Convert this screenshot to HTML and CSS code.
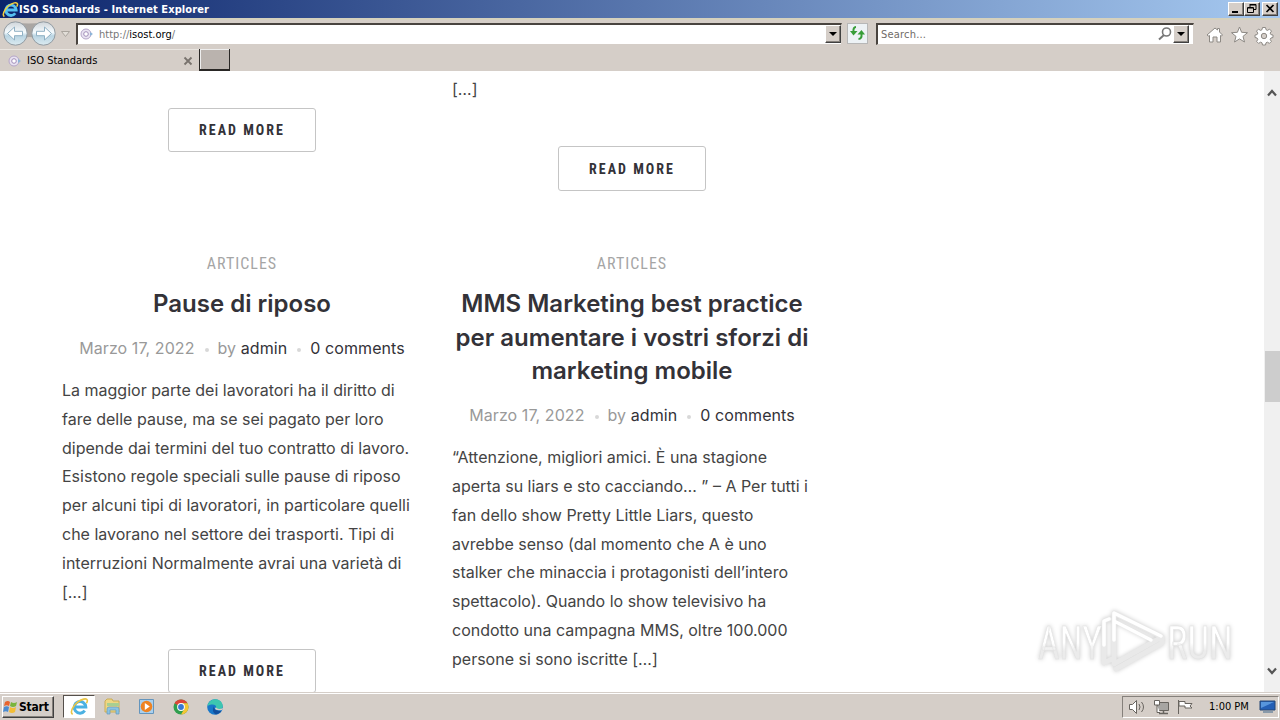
FILE: index.html
```
<!DOCTYPE html>
<html lang="it">
<head>
  <meta charset="UTF-8">
  <title>ISO Standards</title>
  <link rel="stylesheet" href="styles.css">
</head>
<body>
  <div class="titlebar">
    <svg viewBox="0 0 18 18" width="17" height="17"><path d="M14 13a5.500 5.500 0 1 1 1-3.500H5" fill="none" stroke="#54c0f0" stroke-width="3"/><path d="M2.500 16.500C-1 14 5 4 13 2c4-1 4 2 2.500 4" fill="none" stroke="#f5d03c" stroke-width="1.600"/></svg>
    <span class="window-title">ISO Standards - Internet Explorer</span>
    <div class="window-buttons">
      <button><svg width="14" height="12"><path d="M3 9h6" stroke="#000" stroke-width="2"/></svg></button>
      <button><svg width="14" height="12"><path d="M5 2h6M5 1.500h6v5H9M5 1v3M3 5h5M2.500 4.500h6v5h-6z" fill="none" stroke="#000"/></svg></button>
      <button class="close"><svg width="14" height="12"><path d="M3.500 2l7 7M10.500 2l-7 7" stroke="#000" stroke-width="1.700"/></svg></button>
    </div>
  </div>

  <div class="navbar">
    <svg class="nav-arrows" width="74" height="30">
      <defs><linearGradient id="ball" x2="0" y2="1"><stop stop-color="#cfd5da"/><stop offset=".45" stop-color="#f4fafd"/><stop offset=".6" stop-color="#b9d4e2"/><stop offset="1" stop-color="#dcebf1"/></linearGradient></defs>
      <path d="M14 3q15 3 30 0v18q-14-6-30 0z" fill="#aaa6a3"/>
      <circle cx="15.500" cy="14.500" r="11.700" fill="url(#ball)" stroke="#929ba2"/>
      <circle cx="43.500" cy="14.500" r="11.700" fill="url(#ball)" stroke="#929ba2"/>
      <path d="M7.500 14.500l7-6.500v4.300h8v4.400h-8v4.300zM51.500 14.500l-7-6.500v4.300h-8v4.400h8v4.300z" fill="#fff" stroke="#8fb0c4"/>
      <path d="M61.500 12.500h8l-4 5z" fill="#e2ded8" stroke="#aaa59e"/>
    </svg>
    <div class="address">
      <svg class="site-icon" width="14" height="14"><circle cx="6" cy="7" r="5" fill="#e9e4f2" stroke="#b5a5c9"/><circle cx="6" cy="7" r="2.300" fill="#fff" stroke="#a18db9"/><path d="M10 5l3 2-3 2" fill="#8bb5d8"/></svg>
      <span class="url">http://<b>isost.org</b>/</span>
      <button class="drop"></button>
    </div>
    <button class="refresh"><svg width="19" height="19"><path d="M8 3Q5 3 5.500 8" fill="none" stroke="#379d37" stroke-width="2"/><path d="M2 7h7.500l-4 4.500z" fill="#379d37"/><path d="M10.500 15q3.500 0 3-5" fill="none" stroke="#379d37" stroke-width="2"/><path d="M9.500 10.500H17l-3.500-4.500z" fill="#379d37"/></svg></button>
    <div class="search">
      <span>Search...</span>
      <svg width="16" height="16"><circle cx="9.500" cy="6" r="4" fill="none" stroke="#777" stroke-width="1.600"/><path d="M7 9l-5 4.500" stroke="#777" stroke-width="2"/></svg>
      <button class="drop"></button>
    </div>
    <svg class="tools" width="72" height="22">
      <g fill="#fff" stroke="#8d8984">
        <path d="M2 11l8-7 2.500 2V4.500h2V8l3 3-1 1-1-.5V18H12v-5H8v5H4.500v-6.500l-1 .5z"/>
        <path d="M34.500 3l2.100 5.300 5.900.4-4.500 3.700 1.500 5.600-5-3.100-5 3.100 1.500-5.600-4.500-3.700 5.900-.4z"/>
        <g id="gear">
          <path d="M57.500 3.500h3l.5 2.200 1.500.7 2-1.300 2 2-1.300 2 .7 1.500 2.100.4v2.500l-2.100.5-.7 1.500 1.200 1.900-2 2-1.900-1.200-1.500.6-.5 2.200h-3l-.5-2.200-1.500-.6-1.900 1.200-2-2 1.200-1.900-.7-1.500-2.100-.5V11l2.100-.4.7-1.500-1.300-2 2-2 2 1.300 1.500-.7z"/>
          <circle cx="59" cy="12" r="2.700" fill="#d5cec8"/>
        </g>
      </g>
    </svg>
  </div>

  <div class="tabs">
    <div class="tab">
      <svg class="site-icon" width="14" height="14"><circle cx="6" cy="7" r="5" fill="#e9e4f2" stroke="#b5a5c9"/><circle cx="6" cy="7" r="2.300" fill="#fff" stroke="#a18db9"/><path d="M10 5l3 2-3 2" fill="#8bb5d8"/></svg>
      <span>ISO Standards</span>
      <svg class="tab-close" width="10" height="10"><path d="M1.500 1.500l7 7M8.500 1.500l-7 7" stroke="#79736e" stroke-width="1.800"/></svg>
    </div>
    <div class="new-tab"></div>
  </div>

  <div class="viewport">
    <main class="posts">
      <article class="post previous first">
        <a class="read-more"><span>READ MORE</span></a>
      </article>
      <article class="post previous second">
        <p>[…]</p>
        <a class="read-more"><span>READ MORE</span></a>
      </article>
      <article class="post">
        <div class="category"><span>ARTICLES</span></div>
        <h2>Pause di riposo</h2>
        <div class="meta"><span>Marzo 17, 2022</span><i></i><span>by <a>admin</a></span><i></i><a>0 comments</a></div>
        <p>La maggior parte dei lavoratori ha il diritto di<br>fare delle pause, ma se sei pagato per loro<br>dipende dai termini del tuo contratto di lavoro.<br>Esistono regole speciali sulle pause di riposo<br>per alcuni tipi di lavoratori, in particolare quelli<br>che lavorano nel settore dei trasporti. Tipi di<br>interruzioni Normalmente avrai una varietà di<br>[…]</p>
        <a class="read-more"><span>READ MORE</span></a>
      </article>
      <article class="post">
        <div class="category"><span>ARTICLES</span></div>
        <h2>MMS Marketing best practice<br>per aumentare i vostri sforzi di<br>marketing mobile</h2>
        <div class="meta"><span>Marzo 17, 2022</span><i></i><span>by <a>admin</a></span><i></i><a>0 comments</a></div>
        <p>“Attenzione, migliori amici. È una stagione<br>aperta su liars e sto cacciando… ” – A Per tutti i<br>fan dello show Pretty Little Liars, questo<br>avrebbe senso (dal momento che A è uno<br>stalker che minaccia i protagonisti dell’intero<br>spettacolo). Quando lo show televisivo ha<br>condotto una campagna MMS, oltre 100.000<br>persone si sono iscritte […]</p>
      </article>
    </main>
    <div class="scrollbar">
      <svg class="up" width="12" height="10"><path d="M2 7.500L6 3l4 4.500" fill="none" stroke="#555" stroke-width="2.200"/></svg>
      <div class="thumb"></div>
      <svg class="down" width="12" height="10"><path d="M2 2.500L6 7l4-4.500" fill="none" stroke="#555" stroke-width="2.200"/></svg>
    </div>
    <svg class="watermark" width="220" height="80">
      <defs><linearGradient id="fade" x2="0" y2="1"><stop offset=".5" stop-color="#fff"/><stop offset=".65" stop-color="#ebebeb"/></linearGradient></defs>
      <text x="8" y="59" textLength="64" lengthAdjust="spacingAndGlyphs">ANY</text>
      <text x="137" y="59" textLength="66" lengthAdjust="spacingAndGlyphs">RUN</text>
      <g fill="none" stroke-linejoin="round" stroke-linecap="round">
        <path class="edge" d="M84 55V13l48 24-48 27zM86 69l46-26v-6M74 63V21l5-2M74 63l8-4"/>
        <path class="face" d="M74 45V21l5-2M84 40V13l47 23M86 22l35 18"/>
      </g>
    </svg>
  </div>

  <div class="taskbar">
    <button class="start"><svg width="16" height="16"><path d="M2 3q3-2 5 0L6 7Q4 5.500 1 7z" fill="#e8642e"/><path d="M8 3q3 2 6 0l-1 4q-3 2-6 0z" fill="#79b53c"/><path d="M1 8q3-1.500 5 0l-1 5q-2-1.500-5 0z" fill="#4b8bd0"/><path d="M7 8q3 2 6 0l-1 5q-3 2-6 0z" fill="#f3bd36"/></svg><span>Start</span></button>
    <div class="task active"><svg viewBox="0 0 18 18" width="19" height="19"><path d="M14 13a5.500 5.500 0 1 1 1-3.500H5" fill="none" stroke="#4bb1e2" stroke-width="2.800"/><path d="M2.500 16.500C-1 14 5 4 13 2c4-1 4 2 2.500 4" fill="none" stroke="#e9c445" stroke-width="1.500"/></svg></div>
    <div class="task"><svg width="18" height="18"><path d="M1 3l2-2h5l1 2h6v11H1z" fill="#eed783" stroke="#c9ac57"/><path d="M3 5h12v3H3z" fill="#a8cf91"/><path d="M3 16v-5q0-2 2-2h8q2 0 2 2v5h-3v-4H6v4z" fill="#8ac3e3" stroke="#6599b8" stroke-width=".7"/></svg></div>
    <div class="task"><svg width="18" height="18"><path d="M1.500 1.500h14v14h-14z" fill="#a9d0ee" stroke="#6495bd"/><circle cx="8.500" cy="8.500" r="5.800" fill="#ee8322"/><path d="M6.800 5l5 3.500-5 3.500z" fill="#fff"/></svg></div>
    <div class="task"><svg width="18" height="18"><circle cx="9" cy="9" r="7.500" fill="#2f9e4e"/><path d="M9 9L2.500 5.300A7.500 7.500 0 0 1 15.500 5.300H9z" fill="#dd4538"/><path d="M9 5.300h6.500A7.500 7.500 0 0 1 9 16.500l3.500-6z" fill="#f5c634"/><circle cx="9" cy="9" r="3.900" fill="#fff"/><circle cx="9" cy="9" r="2.900" fill="#3878d4"/></svg></div>
    <div class="task"><svg width="18" height="18"><circle cx="9" cy="9" r="7.800" fill="#1877c9"/><path d="M1.500 8C3-1 16-1 16.800 8c0 4-5 4-6.800 2 1-3-3-5-8.500-2z" fill="#3dc6b0"/><path d="M8 8q-1 5 7.500 5-2 3-5.500 3.500Q5 14 8 8z" fill="#124f9d"/><path d="M9 10q0 3 7 2l1-2q-5 2-7-.5z" fill="#d5cec8"/></svg></div>
    <div class="tray">
      <svg width="74" height="20">
        <g fill="#fff" stroke="#68645f">
          <path d="M6.500 7.500h3l4-4v13l-4-4h-3z"/><path d="M16 7q2 3 0 6M18.500 5q4 5 0 10" fill="none"/>
          <path d="M34.500 5.500h11v8h-11z" fill="#a7a5a2"/><path d="M36 16.500h9M40.500 14v2" fill="none" stroke-width="1.500"/><path d="M31.500 3.500h5V8h-5zM34 8v7.500h3"/>
          <path d="M55.500 3v14M56 4.500h6v2h7l-2 2.500 2 2h-7v-2h-6z"/>
        </g>
      </svg>
      <span class="clock">1:00 PM</span>
      <svg width="18" height="16"><path d="M1 2h15v9H1z" fill="#245fb5" stroke="#244675"/><path d="M2 3h13L2 9z" fill="#5795dc"/><path d="M4 13h10" stroke="#899aaa" stroke-width="2"/></svg>
    </div>
  </div>
</body>
</html>
```
FILE: styles.css
```
* {
  box-sizing: border-box;
}
body {
  margin: 0;
  width: 1280px;
  height: 720px;
  overflow: hidden;
  display: flex;
  flex-direction: column;
  background: #d5cec8;
  font-family: "DejaVu Sans Condensed", "DejaVu Sans", sans-serif;
  font-stretch: condensed;
  font-size: 11px;
  color: #000;
}
svg {
  display: block;
  flex: none;
}
button {
  padding: 0;
  border: 1px solid;
  border-color: #fff #404040 #404040 #fff;
  border-radius: 0;
  background: #d5cec8;
  box-shadow: inset -1px -1px #85807b;
  font-family: inherit;
}
.titlebar {
  height: 18px;
  display: flex;
  align-items: center;
  padding: 0 2px;
  background: linear-gradient(90deg, #0b246b, #a6c9f0);
  color: #fff;
}
.window-title {
  font-weight: bold;
  font-size: 11px;
  letter-spacing: 0.1px;
}
.window-buttons {
  display: flex;
  margin-left: auto;
}
.window-buttons button {
  width: 16px;
  height: 14px;
}
.window-buttons .close {
  margin-left: 2px;
}
.navbar {
  height: 31px;
  display: flex;
  align-items: center;
  padding-bottom: 2px;
  border-top: 2px solid #d5d1bd;
}
.address, .search {
  height: 22px;
  display: flex;
  align-items: center;
  background: #fff;
  border: 1px solid #d5cec8;
  border-top: 2px solid #49443f;
  border-left: 2px solid #49443f;
}
.address {
  width: 766px;
  margin-left: 2px;
  padding-left: 2px;
}
.url {
  color: #777;
  margin-left: 5px;
}
.url b {
  color: #000;
  font-weight: normal;
}
.drop {
  width: 16px;
  height: 18px;
  margin-left: auto;
  display: flex;
  align-items: center;
  justify-content: center;
}
.drop::after {
  content: "";
  border: 4px solid transparent;
  border-top-color: #000;
  border-bottom: 0;
}
.refresh {
  width: 21px;
  height: 21px;
  margin: 0 8px 0 5px;
  background: #edf2f5;
  border-color: #b7b7b7;
  box-shadow: none;
}
.search {
  width: 318px;
  padding: 0 4px 0 3px;
  color: #706b67;
}
.search span {
  letter-spacing: 0.2px;
}
.search svg {
  margin-left: auto;
}
.search .drop {
  margin-left: 0;
}
.tools {
  margin: 3px 0 0 11px;
}
.tabs {
  height: 22px;
  display: flex;
}
.tab {
  width: 199px;
  display: flex;
  align-items: center;
  padding: 0 6px 0 8px;
  border-top: 1px solid #e9e5e0;
}
.tab span {
  margin-left: 5px;
}
.tab-close {
  margin-left: auto;
}
.new-tab {
  width: 31px;
  height: 22px;
  background: #bab3ae;
  border: 1px solid #292725;
  border-width: 0 1px 2px 1px;
  box-shadow: inset 1px 1px #eee;
}
.viewport {
  height: 621px;
  overflow: hidden;
  position: relative;
  display: flex;
  justify-content: space-between;
  background: #fff;
  font-family: Inter, sans-serif;
  font-stretch: normal;
  font-size: 16px;
  line-height: 28.8px;
  color: #444;
}
.posts {
  display: grid;
  grid-template-columns: 360px 360px;
  grid-template-rows: 178.9px auto;
  column-gap: 30px;
  margin-left: 62px;
  white-space: nowrap;
}
.previous.first {
  padding-top: 37px;
}
.previous.second {
  padding-top: 4px;
}
.post p {
  margin: 0;
}
.read-more {
  width: 148px;
  height: 44.4px;
  margin: 0 auto;
  display: flex;
  align-items: center;
  justify-content: center;
  border: 1px solid #c5c5c5;
  border-radius: 3px;
  font: bold 14px Roboto, sans-serif;
  font-stretch: 75%;
  letter-spacing: 2px;
  color: #333238;
}
p + .read-more {
  margin-top: 42.6px;
}
.category {
  text-align: center;
  font-family: Roboto, sans-serif;
  font-stretch: 75%;
  letter-spacing: 1px;
  color: #a5a5a5;
}
h2 {
  margin: 8.4px 0 13px;
  text-align: center;
  font-size: 24px;
  font-weight: 600;
  line-height: 33.6px;
  color: #333238;
}
.meta {
  display: flex;
  justify-content: center;
  align-items: center;
  margin-bottom: 13.5px;
  letter-spacing: 0.08px;
  color: #999;
}
.meta a {
  color: #333238;
}
.meta i {
  width: 4px;
  height: 4px;
  margin: 4px 9px 0 10px;
  border-radius: 50%;
  background: #d8d8d8;
}
.scrollbar {
  width: 16px;
  display: flex;
  flex-direction: column;
  padding: 17px 0 16px 1px;
  background: #f0f0f0;
}
.up, .down {
  margin-left: 1px;
}
.thumb {
  height: 51px;
  margin-top: 253px;
  background: #cdcdcd;
}
.down {
  margin-top: auto;
}
.watermark {
  position: absolute;
  left: 1030px;
  top: 529px;
  filter: drop-shadow(0 0 2px #ccc);
}
.watermark text {
  font: 46px Roboto, sans-serif;
  font-stretch: 75%;
  fill: url(#fade);
  stroke: #e2e2e2;
  stroke-width: 0.5px;
}
.watermark .edge {
  stroke: #e9e9e9;
  stroke-width: 5px;
}
.watermark .face {
  stroke: #fff;
  stroke-width: 3.5px;
}
.taskbar {
  height: 28px;
  display: flex;
  align-items: center;
  padding-left: 2px;
  border-top: 1px solid #d5cec8;
  box-shadow: inset 0 1px #fff;
}
.start {
  width: 52px;
  height: 22px;
  margin-right: 9px;
  display: flex;
  align-items: center;
  font-weight: bold;
  font-size: 12px;
  letter-spacing: -0.2px;
}
.task {
  width: 34px;
  height: 23px;
  display: flex;
  align-items: center;
  justify-content: center;
}
.task.active {
  width: 32px;
  margin-right: 1px;
  background: #fff;
  border: 1px solid;
  border-color: #55504b #fff #fff #55504b;
}
.tray {
  width: 157px;
  height: 22px;
  margin-left: auto;
  margin-right: 1px;
  display: flex;
  align-items: center;
  border: 1px solid;
  border-color: #85807b #fff #fff #85807b;
}
.clock {
  margin: 0 10px 0 12px;
}
```
